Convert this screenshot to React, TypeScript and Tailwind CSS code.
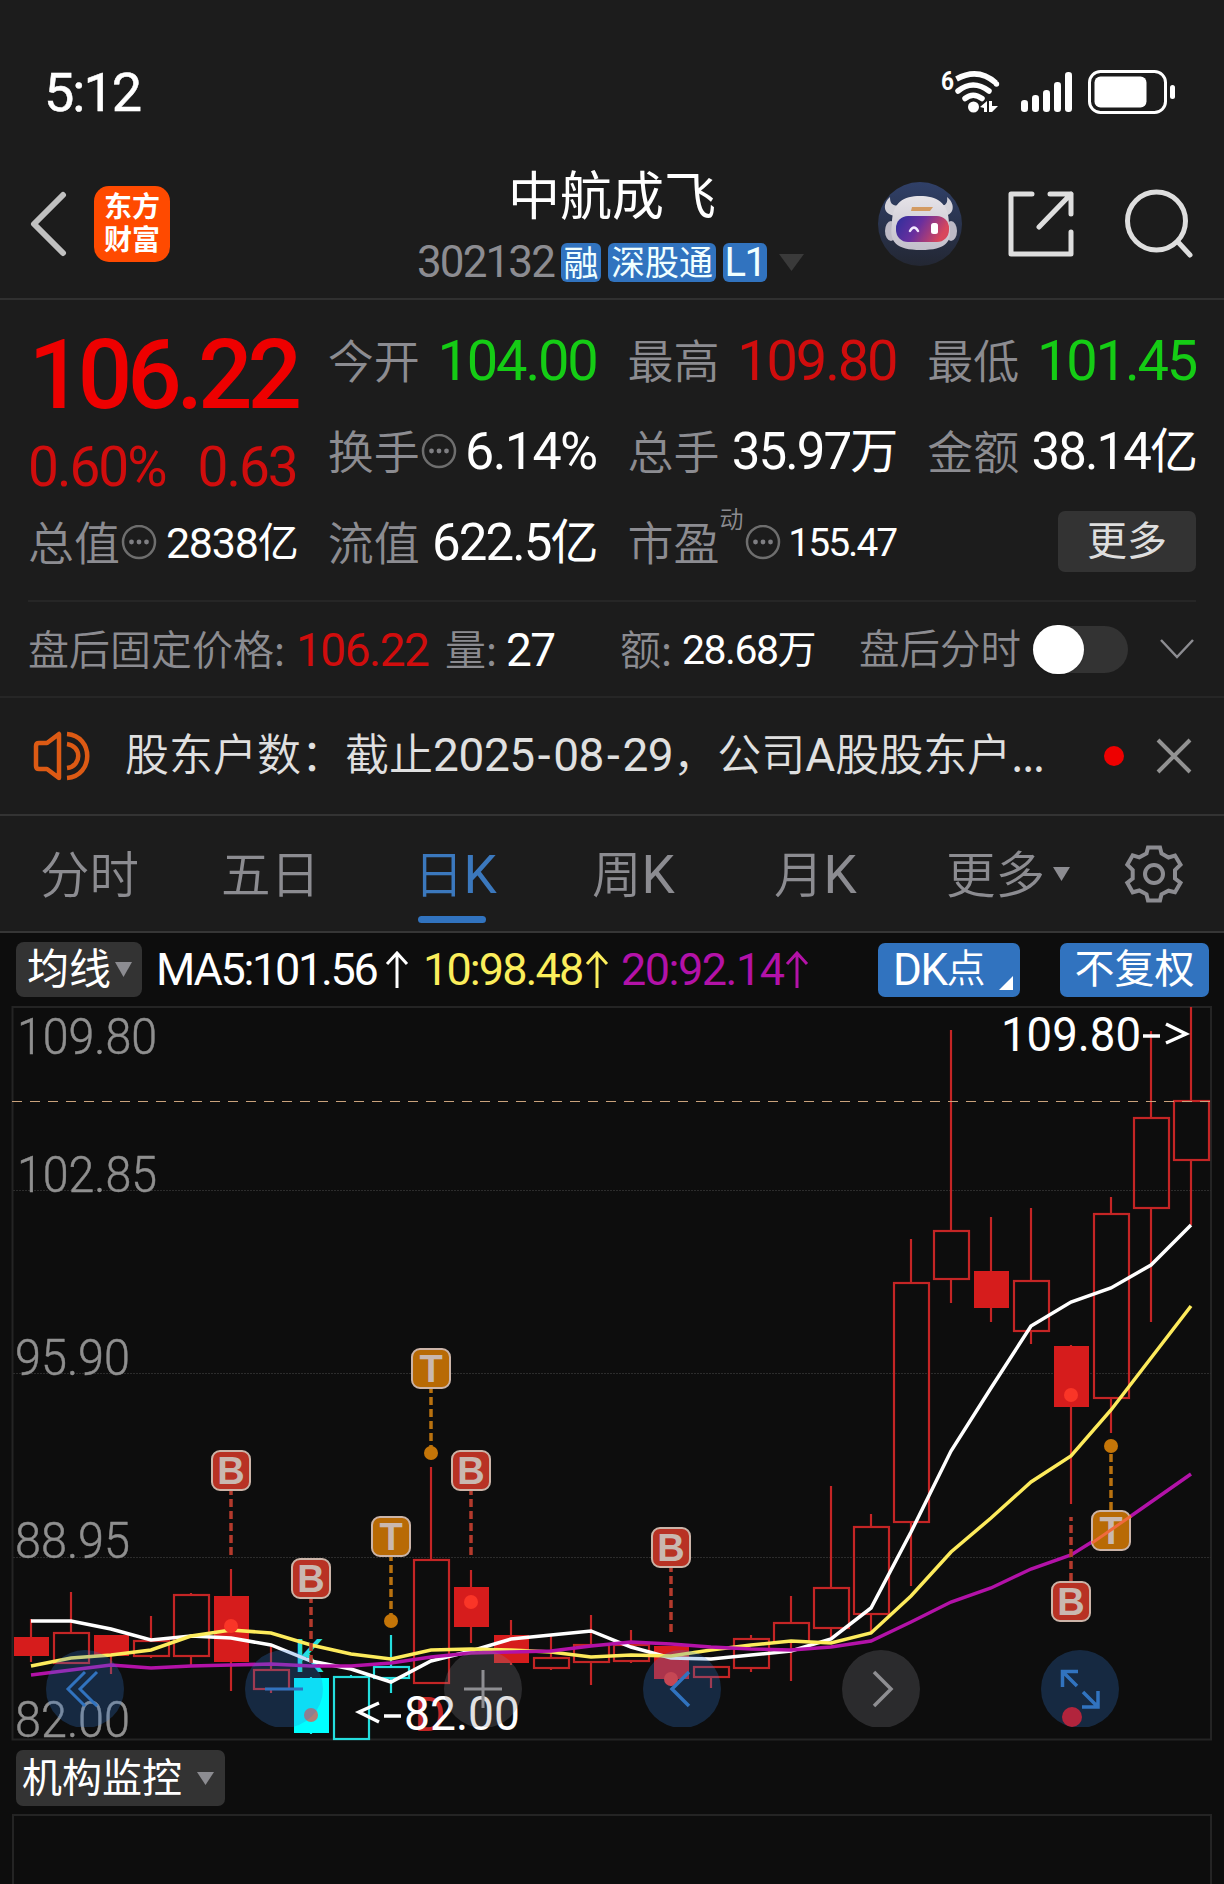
import type { ReactNode } from "react";

const CN = "font-['Noto_Sans_CJK_SC',sans-serif]";

type Candle = { open: number; close: number; high: number; low: number; fill?: boolean; cyan?: boolean };

// y values are in chart units, one candle every 40px
const candles: Candle[] = [
  { open: 1637, close: 1656, high: 1619, low: 1662, fill: true },
  { open: 1633, close: 1663, high: 1592, low: 1663 },
  { open: 1635, close: 1656, high: 1635, low: 1674, fill: true },
  { open: 1641, close: 1656, high: 1616, low: 1658 },
  { open: 1595, close: 1656, high: 1593, low: 1665 },
  { open: 1596, close: 1662, high: 1569, low: 1691, fill: true },
  { open: 1670, close: 1689, high: 1645, low: 1693 },
  { open: 1678, close: 1733, high: 1677, low: 1734, fill: true, cyan: true },
  { open: 1677, close: 1739, high: 1675, low: 1739, cyan: true },
  { open: 1667, close: 1678, high: 1635, low: 1693, cyan: true },
  { open: 1560, close: 1683, high: 1467, low: 1684 },
  { open: 1587, close: 1627, high: 1570, low: 1643, fill: true },
  { open: 1635, close: 1663, high: 1620, low: 1665, fill: true },
  { open: 1658, close: 1668, high: 1635, low: 1670 },
  { open: 1645, close: 1662, high: 1615, low: 1685 },
  { open: 1645, close: 1661, high: 1630, low: 1663 },
  { open: 1646, close: 1679, high: 1646, low: 1686, fill: true },
  { open: 1667, close: 1677, high: 1667, low: 1688 },
  { open: 1639, close: 1668, high: 1635, low: 1672 },
  { open: 1623, close: 1642, high: 1596, low: 1681 },
  { open: 1588, close: 1628, high: 1486, low: 1637 },
  { open: 1527, close: 1614, high: 1514, low: 1633 },
  { open: 1283, close: 1522, high: 1239, low: 1586 },
  { open: 1231, close: 1279, high: 1030, low: 1303 },
  { open: 1271, close: 1308, high: 1217, low: 1322, fill: true },
  { open: 1281, close: 1331, high: 1208, low: 1344 },
  { open: 1346, close: 1407, high: 1345, low: 1504, fill: true },
  { open: 1214, close: 1398, high: 1197, low: 1433 },
  { open: 1118, close: 1208, high: 1031, low: 1322 },
  { open: 1101, close: 1160, high: 1007, low: 1225 },
];

const ma5 = [1621, 1621, 1629, 1640, 1636, 1638, 1645, 1661, 1669, 1682, 1661, 1651, 1639, 1635, 1631, 1647, 1658, 1659, 1655, 1651, 1639, 1608, 1532, 1451, 1388, 1326, 1302, 1288, 1265, 1225];
const ma10 = [1666, 1658, 1655, 1650, 1636, 1630, 1633, 1645, 1654, 1659, 1650, 1649, 1650, 1652, 1657, 1655, 1656, 1650, 1645, 1641, 1643, 1633, 1596, 1552, 1518, 1482, 1456, 1410, 1358, 1306];
const ma20 = [1675, 1670, 1665, 1668, 1666, 1665, 1664, 1666, 1666, 1663, 1657, 1653, 1652, 1651, 1646, 1642, 1644, 1647, 1649, 1650, 1647, 1641, 1622, 1602, 1588, 1569, 1555, 1530, 1502, 1474];

const cx = (i: number) => 31 + 40 * i;
const toPoints = (values: number[]) => values.map((y, i) => `${cx(i)},${y}`).join(" ");

const markers = [
  { kind: "B", i: 5, top: 1450, from: 1491, to: 1556, dot: 1626, dim: false },
  { kind: "B", i: 7, top: 1558, from: 1599, to: 1663, dot: 1715, dim: true },
  { kind: "T", i: 9, top: 1516, from: 1557, to: 1621, dot: 1621, dim: false },
  { kind: "T", i: 10, top: 1348, from: 1389, to: 1453, dot: 1453, dim: false },
  { kind: "B", i: 11, top: 1450, from: 1491, to: 1555, dot: 1602, dim: false },
  { kind: "B", i: 16, top: 1527, from: 1568, to: 1632, dot: 1679, dim: false },
  { kind: "B", i: 26, top: 1581, from: 1517, to: 1581, dot: 1395, dim: false },
  { kind: "T", i: 27, top: 1510, from: 1446, to: 1510, dot: 1446, dim: false },
];

const axis = [
  { label: "109.80", x: 17, y: 1054, w: 140 },
  { label: "102.85", x: 17, y: 1192, w: 140 },
  { label: "95.90", x: 15, y: 1375, w: 115 },
  { label: "88.95", x: 15, y: 1558, w: 115 },
  { label: "82.00", x: 15, y: 1737, w: 115 },
];

function Triangle({ className }: { className: string }) {
  return (
    <svg viewBox="0 0 20 16" preserveAspectRatio="none" className={className}>
      <path d="M0 0H20L10 16Z" fill="currentColor" />
    </svg>
  );
}

function InfoDots() {
  return (
    <svg viewBox="0 0 36 36" className="ml-[1px] h-9 w-9 shrink-0">
      <circle cx="18" cy="17" r="16" fill="none" stroke="#6e6e6e" strokeWidth="2.5" />
      <circle cx="10.5" cy="17" r="2.4" fill="#7e7e82" />
      <circle cx="18" cy="17" r="2.4" fill="#7e7e82" />
      <circle cx="25.5" cy="17" r="2.4" fill="#7e7e82" />
    </svg>
  );
}

function StatusBar() {
  return (
    <div className="flex h-[152px] items-start justify-between pt-[65px] pr-[47px] pl-[44px]">
      <span className="text-[54px] leading-[56px] tracking-[-2px] text-white [-webkit-text-stroke:0.5px_white]">5:12</span>
      <svg viewBox="938 64 238 54" className="h-[54px] w-[238px]">
        <text x="940" y="88.500" fontSize="26" fontWeight="700" fill="#fff" textLength="13" lengthAdjust="spacingAndGlyphs">6</text>
        <g fill="none" stroke="#fff" strokeWidth="5.5">
          <path d="M955.500 78Q977 66 995 82" />
          <path d="M957 90Q972 78 988 90M964 97.500Q972 91 981 97.500" strokeLinecap="round" />
        </g>
        <circle cx="995.500" cy="83" r="2.700" fill="#fff" />
        <circle cx="972.500" cy="106" r="5.500" fill="#fff" />
        <path d="M979 106L986 100V111H983V107ZM988 100H991V105H997L991 111H988Z" fill="#fff" />
        <g fill="#fff">
          <rect x="1020" y="99" width="7" height="12" rx="3.2" />
          <rect x="1031" y="94" width="7" height="17" rx="3.2" />
          <rect x="1042" y="89" width="7" height="22" rx="3.2" />
          <rect x="1053" y="81" width="7" height="30" rx="3.2" />
          <rect x="1064" y="71" width="7" height="40" rx="3.2" />
          <rect x="1093.500" y="75.5" width="52" height="31" rx="6" />
          <rect x="1169" y="84" width="5" height="14" rx="2.5" />
        </g>
        <rect x="1088.5" y="70.5" width="76" height="41" rx="11" fill="none" stroke="#fff" strokeWidth="3" />
      </svg>
    </div>
  );
}

function Robot() {
  return (
    <svg viewBox="0 0 84 84" className="h-[84px] w-[84px]">
      <defs>
        <linearGradient id="sky" x1="0" y1="0" x2="0" y2="1">
          <stop offset="0" stopColor="#304068" />
          <stop offset="1" stopColor="#232733" />
        </linearGradient>
        <linearGradient id="visor" x1="0" y1="0" x2="1" y2="0.3">
          <stop offset="0" stopColor="#2c2f9c" />
          <stop offset="0.5" stopColor="#6a2f9e" />
          <stop offset="1" stopColor="#d8475c" />
        </linearGradient>
        <linearGradient id="helmet" x1="0" y1="0" x2="0" y2="1">
          <stop offset="0" stopColor="#e6e3e8" />
          <stop offset="1" stopColor="#c2bfca" />
        </linearGradient>
      </defs>
      <circle cx="42" cy="42" r="42" fill="url(#sky)" />
      <path d="M12 15C5 21 4 32 17 34L24 23C15 25 12 22 12 15ZM69 15C77 21 77 32 67 34L60 23C68 25 70 21 69 15Z" fill="#d5d3da" />
      <ellipse cx="13" cy="49" rx="6" ry="10" fill="#bdbac6" />
      <ellipse cx="73" cy="49" rx="6" ry="10" fill="#bdbac6" />
      <path d="M14 42C14 20 26 14 42 14S71 20 71 42C75 60 68 68 43 68S11 60 14 42Z" fill="url(#helmet)" />
      <path d="M34 25H55L52 29H33Z" fill="#d39a62" />
      <rect x="18" y="34" width="53" height="26" rx="12" fill="url(#visor)" />
      <path d="M32 49Q36 42 40 49" fill="none" stroke="#f3e8ff" strokeWidth="2.5" strokeLinecap="round" />
      <rect x="53" y="41" width="7" height="11" rx="2.5" fill="#fff" />
    </svg>
  );
}

function Tag({ children, className }: { children: ReactNode; className: string }) {
  return (
    <span className={`flex h-[39px] items-center justify-center rounded-[6px] bg-[#3173bf] text-[#f0ffff] ${className}`}>
      {children}
    </span>
  );
}

function Header() {
  return (
    <header className="flex h-[148px] items-start border-b-2 border-[#303030] pr-[32px] pl-[28px]">
      <div className="flex w-[389px] items-center gap-[26px] pt-[34px]">
        <svg viewBox="0 0 40 66" className="h-[66px] w-10">
          <path d="M35 4L6 33L35 62" fill="none" stroke="#c0c0c0" strokeWidth="6" strokeLinecap="round" strokeLinejoin="round" />
        </svg>
        <div className={`flex h-[76px] w-[76px] flex-col items-center justify-center rounded-[15px] bg-[#ff4a00] pb-1 text-[28px] leading-[33px] font-bold text-white ${CN}`}>
          <span>东方</span>
          <span>财富</span>
        </div>
      </div>
      <div className="flex w-[388px] flex-col">
        <h1 className={`mt-[9px] ml-[91px] text-[52px] leading-[64px] font-normal text-white ${CN}`}>中航成飞</h1>
        <div className="mt-[18px] flex items-center">
          <span className="w-[144px] text-[44px] leading-[39px] tracking-[-1.9px] text-[#8c8c91]">302132</span>
          <Tag className={`w-[40px] pb-[4px] text-[35px] leading-none font-normal ${CN}`}>融</Tag>
          <Tag className={`ml-[7px] w-[108px] pb-[4px] text-[34px] leading-none font-normal ${CN}`}>深股通</Tag>
          <Tag className="ml-[7px] w-[44px] text-[40px] leading-none tracking-[-1.5px]">L1</Tag>
          <Triangle className="ml-[12px] h-[17px] w-[25px] text-[#3a3a3a]" />
        </div>
      </div>
      <div className="flex flex-1 items-center justify-end pt-[30px]">
        <Robot />
        <svg viewBox="0 0 68 68" className="ml-[45px] h-[68px] w-[68px]" fill="none" stroke="#dedede" strokeWidth="5" strokeLinecap="round" strokeLinejoin="round">
          <path d="M25 4H4V64H64V42M43 4H64V24M64 4L32 37" />
        </svg>
        <svg viewBox="0 0 72 72" className="-mr-[2px] ml-[47px] h-[72px] w-[72px]" fill="none" stroke="#dedede" strokeWidth="5" strokeLinecap="round">
          <circle cx="34.500" cy="33" r="29" />
          <path d="M56 54L68 67" />
        </svg>
      </div>
    </header>
  );
}

function Label({ children }: { children: ReactNode }) {
  return <span className={`-mt-[7px] text-[46px] leading-[52px] font-[350] text-[#8c8c91] ${CN}`}>{children}</span>;
}

function Cell({ label, children, dots }: { label: string; children: ReactNode; dots?: boolean }) {
  return (
    <div className="flex h-[52px] items-center whitespace-nowrap">
      <Label>{label}</Label>
      {dots && <InfoDots />}
      <span className="ml-auto flex items-center">{children}</span>
    </div>
  );
}

function Unit({ children, className }: { children: ReactNode; className: string }) {
  return <span className={`relative -top-[1px] leading-[0px] tracking-[-2px] ${className} ${CN}`}>{children}</span>;
}

function Quote() {
  return (
    <section className="mx-[28px] grid h-[302px] grid-cols-4 grid-rows-[91px_91px_91px] gap-x-[31px] border-b-2 border-[#262626] pt-[35px]">
      <div className="row-span-2 flex flex-col">
        <span className="mt-[-4px] self-end text-[96px] leading-[88px] font-medium tracking-[-5.2px] text-[#ee0000]">106.22</span>
        <div className="mt-[20px] flex justify-between text-[55px] leading-[56px] tracking-[-2px] text-[#d00d0d]">
          <span>0.60%</span>
          <span>0.63</span>
        </div>
      </div>
      <Cell label="今开"><span className="text-[56px] leading-[52px] tracking-[-2.2px] text-[#15cc15]">104.00</span></Cell>
      <Cell label="最高"><span className="text-[56px] leading-[52px] tracking-[-2.2px] text-[#d00d0d]">109.80</span></Cell>
      <Cell label="最低"><span className="text-[56px] leading-[52px] tracking-[-2.2px] text-[#15cc15]">101.45</span></Cell>
      <Cell label="换手" dots><span className="text-[52px] leading-[52px] tracking-[-1.6px] text-white">6.14%</span></Cell>
      <Cell label="总手">
        <span className="text-[51px] leading-[52px] tracking-[-1.9px] text-white">35.97<Unit className="text-[48px]">万</Unit></span>
      </Cell>
      <Cell label="金额">
        <span className="text-[51px] leading-[52px] tracking-[-1.9px] text-white">38.14<Unit className="text-[48px]">亿</Unit></span>
      </Cell>
      <Cell label="总值" dots>
        <span className="text-[43px] leading-[52px] tracking-[-1.2px] text-white">2838<Unit className="text-[41px]">亿</Unit></span>
      </Cell>
      <Cell label="流值">
        <span className="text-[51px] leading-[52px] tracking-[-1.9px] text-white">622.5<Unit className="text-[48px]">亿</Unit></span>
      </Cell>
      <div className="flex h-[52px] items-center whitespace-nowrap">
        <Label>市盈</Label>
        <span className={`-mt-[50px] text-[24px] leading-none font-[350] text-[#8c8c91] ${CN}`}>动</span>
        <InfoDots />
        <span className="ml-auto text-[39px] leading-[52px] tracking-[-2px] text-white">155.47</span>
      </div>
      <button className={`-mt-[6px] flex h-[61px] w-[138px] items-center justify-center justify-self-end rounded-[7px] bg-[#333333] pb-[8px] text-[40px] leading-none font-normal text-[#dedede] ${CN}`}>
        更多
      </button>
    </section>
  );
}

function AfterHours() {
  return (
    <section className="flex h-[96px] items-center border-b-2 border-[#262626] pr-[29px] pl-[28px] whitespace-nowrap text-white">
      <span className={`-mt-[3px] w-[268px] text-[41px] leading-none font-[350] text-[#8c8c91] ${CN}`}>盘后固定价格:</span>
      <span className="mt-[2px] w-[149px] text-[46px] leading-[46px] tracking-[-1.5px] text-[#d00d0d]">106.22</span>
      <span className={`-mt-[3px] w-[61px] text-[41px] leading-none font-[350] text-[#8c8c91] ${CN}`}>量:</span>
      <span className="mt-[2px] w-[114px] text-[46px] leading-[46px] tracking-[-1.7px]">27</span>
      <span className={`-mt-[3px] w-[62px] text-[41px] leading-none font-[350] text-[#8c8c91] ${CN}`}>额:</span>
      <span className="mt-[2px] w-[177px] text-[41px] leading-[46px] tracking-[-1.5px]">28.68<Unit className="text-[39px]">万</Unit></span>
      <span className={`-mt-[3px] w-[174px] text-[40.5px] leading-none font-[350] text-[#8c8c91] ${CN}`}>盘后分时</span>
      <span className="flex h-[47px] w-[95px] rounded-full bg-[#333333]">
        <span className="-mt-px h-[49px] w-[51px] rounded-full bg-white shadow" />
      </span>
      <svg viewBox="0 0 36 24" className="ml-auto h-6 w-9">
        <path d="M2 3L18 20L34 3" fill="none" stroke="#8c8c91" strokeWidth="2.5" />
      </svg>
    </section>
  );
}

function Notice() {
  return (
    <section className="flex h-[118px] items-center border-b-2 border-[#333333] pr-[32px] pl-[32px] whitespace-nowrap">
      <svg viewBox="0 0 60 52" className="h-[52px] w-[60px] shrink-0" fill="none" stroke="#dc5a14" strokeWidth="4.5">
        <path d="M27 4V48L15 39H7Q4 39 4 36V16Q4 13 7 13H15Z" strokeLinejoin="round" />
        <path d="M35 4C62 6 62 46 35 48M35 14C50 16 50 36 35 38" />
      </svg>
      <p className={`-mt-[6px] ml-[33px] flex-1 text-[44px] leading-[56px] font-[350] text-[#e0e0e0] ${CN}`}>
        股东户数：截止
        <span className="font-[Roboto,sans-serif] text-[46px] font-normal tracking-[-0.4px]">2025<span className="mx-[3px]">-</span>08<span className="mx-[3px]">-</span>29</span>
        ，公司<span className="font-[Roboto,sans-serif] text-[46px] font-normal">A</span>股股东户<span className="tracking-[-1px]">...</span>
      </p>
      <span className="h-[20px] w-[20px] rounded-full bg-[#ee0000]" />
      <svg viewBox="0 0 36 36" className="ml-[32px] h-9 w-9">
        <path d="M2 2L34 34M34 2L2 34" stroke="#929292" strokeWidth="4" />
      </svg>
    </section>
  );
}

function KLetter() {
  return <span className="font-[Roboto,sans-serif] text-[53px] leading-[0px] font-normal">K</span>;
}

function Tabs() {
  return (
    <nav className={`flex h-[117px] items-center border-b-2 border-[#363636] pl-[40px] text-[49.5px] leading-[56px] font-[350] text-[#8c8c91] ${CN}`}>
      <span className="-mt-[3px] w-[181px]">分时</span>
      <span className="-mt-[3px] w-[193px]">五日</span>
      <span className="relative -mt-[3px] w-[178px] text-[#3b78bd]">
        日<KLetter />
        <span className="absolute top-[72px] left-[4px] h-[7px] w-[68px] rounded-full bg-[#3173bf]" />
      </span>
      <span className="-mt-[3px] w-[182px]">周<KLetter /></span>
      <span className="-mt-[3px] w-[172px]">月<KLetter /></span>
      <span className="-mt-[3px]">更多</span>
      <Triangle className="ml-[8px] h-[14px] w-[17px]" />
      <svg viewBox="0 0 60 58" className="ml-[54px] h-[58px] w-[60px]" fill="none" stroke="#8c8c91" strokeWidth="4">
        <path d="M24 2.500H36L37.500 8.500L44.500 12.500L51 10.500L56.500 19.700L51 25V33.500L56.500 37.700L51 47.300L44.500 45.700L37.500 49.300L36 55.500H24L22.500 49.300L15.300 45.500L8.700 47.300L3.300 37.700L8.700 33.500V25L3.300 19.700L8.700 10.300L15.300 12.300L22.500 8.500Z" />
        <circle cx="30" cy="29" r="9" />
      </svg>
    </nav>
  );
}

function UpArrow() {
  return (
    <svg viewBox="0 0 24 38" className="h-[38px] w-[24px]" fill="none" stroke="currentColor" strokeWidth="3">
      <path d="M12 37V3M2 13L12 2L22 13" />
    </svg>
  );
}

function MaBar() {
  return (
    <div className="flex h-[73px] items-center pr-[15px] pl-[16px] text-[45px] leading-none whitespace-nowrap text-white">
      <button className={`flex h-[55px] w-[126px] items-center rounded-[8px] bg-[#333333] pl-[11px] text-[42px] leading-none font-normal ${CN}`}>
        <span className="-mt-[8px]">均线</span>
        <Triangle className="ml-[4px] h-[15px] w-[17px] text-[#8c8c91]" />
      </button>
      <span className="ml-[14px] flex w-[267px] items-center justify-between pr-[14px] tracking-[-2.3px]">MA5:101.56<UpArrow /></span>
      <span className="flex w-[198px] items-center justify-between pr-[12px] tracking-[-1.9px] text-[#fbee5b]">10:98.48<UpArrow /></span>
      <span className="flex w-[188px] items-center justify-between tracking-[-1.5px] text-[#b312a8]">20:92.14<UpArrow /></span>
      <button className="relative ml-auto flex h-[54px] w-[142px] items-center rounded-[7px] bg-[#3173bf] pl-[15px] text-[44px] tracking-[-1.5px]">
        DK<span className={`-mt-[8px] text-[39px] font-[350] ${CN}`}>点</span>
        <svg viewBox="0 0 14 14" className="absolute right-[7px] bottom-[7px] h-[14px] w-[14px]">
          <path d="M14 0V14H0Z" fill="#fff" />
        </svg>
      </button>
      <button className={`ml-[40px] flex h-[54px] w-[149px] items-center justify-center rounded-[7px] bg-[#3173bf] pb-[7px] text-[40px] leading-none font-normal ${CN}`}>不复权</button>
    </div>
  );
}

function Chart() {
  return (
    <svg viewBox="0 1006 1224 735" className="block h-[735px] w-[1224px] shrink-0">
      <rect x="12.500" y="1007" width="1198.500" height="732.500" fill="none" stroke="#242424" strokeWidth="2" />
      {[1190.5, 1373.5, 1557.5].map((y) => (
        <line key={y} x1="13" x2="1211" y1={y} y2={y} stroke="#2c2c2c" strokeDasharray="2 1" />
      ))}
      {axis.map((a) => (
        <text key={a.label} x={a.x} y={a.y} fontSize="50" fontWeight="300" fill="#8f8f8f" stroke="#8f8f8f" strokeWidth="0.500" textLength={a.w} lengthAdjust="spacingAndGlyphs">{a.label}</text>
      ))}

      {candles.map((c, i) => {
        const color = c.cyan ? "#24dede" : "#c42525";
        const x = cx(i);
        return (
          <g key={i} stroke={color} strokeWidth="2.2">
            <line x1={x} x2={x} y1={c.high} y2={c.open} />
            <line x1={x} x2={x} y1={c.close} y2={c.low} />
            {c.fill ? (
              <rect x={x - 17} y={c.open} width="35" height={c.close - c.open} fill={c.cyan ? "#00ffff" : "#d61c1c"} stroke="none" />
            ) : (
              <rect x={x - 17} y={c.open} width="35" height={c.close - c.open} fill="none" />
            )}
          </g>
        );
      })}

      <text x="294" y="1672" fontSize="47" fill="#24dede">K</text>
      <text x="414" y="1731" fontSize="48" fill="#c42525">D</text>

      <g fill="none" strokeWidth="3.500">
        <polyline points={toPoints(ma5)} stroke="#ffffff" />
        <polyline points={toPoints(ma10)} stroke="#fdeb5c" />
        <polyline points={toPoints(ma20)} stroke="#b312a8" />
      </g>

      {markers.map((m) => {
        const x = cx(m.i);
        const isBuy = m.kind === "B";
        const tone = isBuy ? "#b43a2c" : "#b9720f";
        return (
          <g key={m.i}>
            <line x1={x} x2={x} y1={m.from} y2={m.to} stroke={tone} strokeWidth="3.500" strokeDasharray="8 4" strokeDashoffset="4" />
            <circle cx={x} cy={m.dot} r="7" fill={isBuy ? (m.dim ? "#ad8078" : "#fa3527") : "#c47508"} />
            <rect x={x - 19} y={m.top + 1} width="38" height="39" rx="8" fill={isBuy ? "#b83224" : "#b86a05"} stroke="#cbb4a8" strokeWidth="2" />
            <text x={x} y={m.top + 34} textAnchor="middle" fontSize="38" fontWeight="700" fill="#c9b8b0" className="font-['Liberation_Sans',sans-serif]">{m.kind}</text>
          </g>
        );
      })}
      <line x1="1092" x2="1131" y1="1543" y2="1516" stroke="#f06a3c" strokeWidth="3" />

      {/* last price */}
      <line x1="12" x2="1211" y1="1101.500" y2="1101.500" stroke="#c9a27c" strokeDasharray="10 8" />

      <g fill="#ffffff" fontSize="49">
        <text x="1001" y="1051" textLength="140" lengthAdjust="spacingAndGlyphs">109.80</text>
        <path d="M1143 1036H1160M1166 1024L1186 1034L1166 1043" fill="none" stroke="#fff" strokeWidth="3.500" />
        <path d="M379 1703L359 1712L379 1722M384 1716H401" fill="none" stroke="#fff" strokeWidth="3.500" />
        <text x="404" y="1730" textLength="116" lengthAdjust="spacingAndGlyphs">82.00</text>
      </g>

      {/* round chart controls */}
      <clipPath id="pads"><rect x="0" y="1650" width="1224" height="77" /></clipPath>
      <g clipPath="url(#pads)">
        {[85, 284, 682, 1080].map((x) => (
          <circle key={x} cx={x} cy="1689" r="39" fill="#317dd7" fillOpacity="0.26" />
        ))}
        {[483, 881].map((x) => (
          <circle key={x} cx={x} cy="1689" r="39" fill="#89898f" fillOpacity="0.25" />
        ))}
      </g>
      <g fill="none" stroke="#3173bf" strokeWidth="3">
        <path d="M85 1672L68 1689L85 1706M97 1672L80 1689L97 1706" />
        <path d="M265 1689H303" />
        <path d="M689 1672L672 1689L689 1706" strokeWidth="3.500" />
        <path d="M1078 1671.500H1062.500V1687M1063 1672L1077 1686M1098 1691V1707H1082M1097.500 1706.500L1083 1692" strokeWidth="3.500" />
      </g>
      <g fill="none" stroke="#8e8e92" strokeWidth="3">
        <path d="M464 1689H502M483 1670V1708" />
        <path d="M874 1672L891 1689L874 1706" strokeWidth="3.500" />
      </g>
      <circle cx="1072" cy="1717" r="10" fill="#b2243c" />
    </svg>
  );
}

export default function App() {
  return (
    <div className="flex h-[1884px] w-[1224px] flex-col overflow-hidden bg-[#1c1c1c] font-[Roboto,'Noto_Sans_CJK_SC',sans-serif]">
      <StatusBar />
      <Header />
      <Quote />
      <AfterHours />
      <Notice />
      <Tabs />
      <main className="flex flex-1 flex-col bg-[#0d0d0d]">
        <MaBar />
        <Chart />
        <button className={`mt-[9px] ml-[16px] flex h-[56px] w-[209px] items-center rounded-[7px] bg-[#333333] pl-[6px] text-[40px] leading-none font-normal text-white ${CN}`}>
          <span className="-mt-[7px]">机构监控</span>
          <Triangle className="ml-[15px] h-[13px] w-[17px] text-[#8c8c91]" />
        </button>
        <div className="mt-[8px] mr-[12px] ml-[12px] flex-1 border-2 border-b-0 border-[#242424]" />
      </main>
    </div>
  );
}
